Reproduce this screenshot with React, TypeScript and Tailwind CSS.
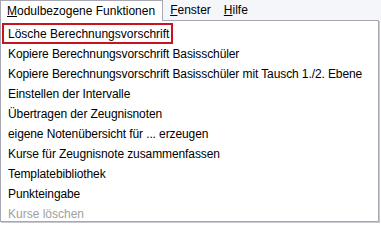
const items = [
  "Lösche Berechnungsvorschrift",
  "Kopiere Berechnungsvorschrift Basisschüler",
  "Kopiere Berechnungsvorschrift Basisschüler mit Tausch 1./2. Ebene",
  "Einstellen der Intervalle",
  "Übertragen der Zeugnisnoten",
  "eigene Notenübersicht für ... erzeugen",
  "Kurse für Zeugnisnote zusammenfassen",
  "Templatebibliothek",
  "Punkteingabe",
];

export default function App() {
  return (
    <div className="w-[381px] h-[224px] bg-white text-[12px] text-black whitespace-nowrap overflow-hidden font-['Liberation_Sans',sans-serif]">
      {/* Menu bar */}
      <div className="flex h-[20px] bg-[#f5f6fa]">
        <div className="flex items-center h-[21px] pl-[6px] pr-[7px] bg-white border-x border-t border-[#a8a8b4]">
          <span><span className="underline">M</span>odulbezogene Funktionen</span>
        </div>
        <div className="flex items-center pl-[7px] pr-[6px]">
          <span><span className="underline">F</span>enster</span>
        </div>
        <div className="flex items-center px-[7px]">
          <span><span className="underline">H</span>ilfe</span>
        </div>
      </div>

      {/* Dropdown */}
      <div className="w-[379px] h-[202px] bg-white border border-[#a8a8b4] shadow-[1px_1px_0_#c8c8d0] pt-[2px] px-[1px]">
        <ul className="flex flex-col">
          {items.map((label, i) => (
            <li
              key={i}
              className={
                i === 0
                  ? "flex items-center h-[21px] w-fit pl-[4px] pr-[2px] border-2 border-[#c8141e]"
                  : "flex items-center h-[20px] pl-[6px] tracking-[-0.1px]"
              }
            >
              {label}
            </li>
          ))}
          <li className="flex items-center h-[20px] pl-[6px] text-[#a0a0a0]">Kurse löschen</li>
        </ul>
      </div>
    </div>
  );
}
